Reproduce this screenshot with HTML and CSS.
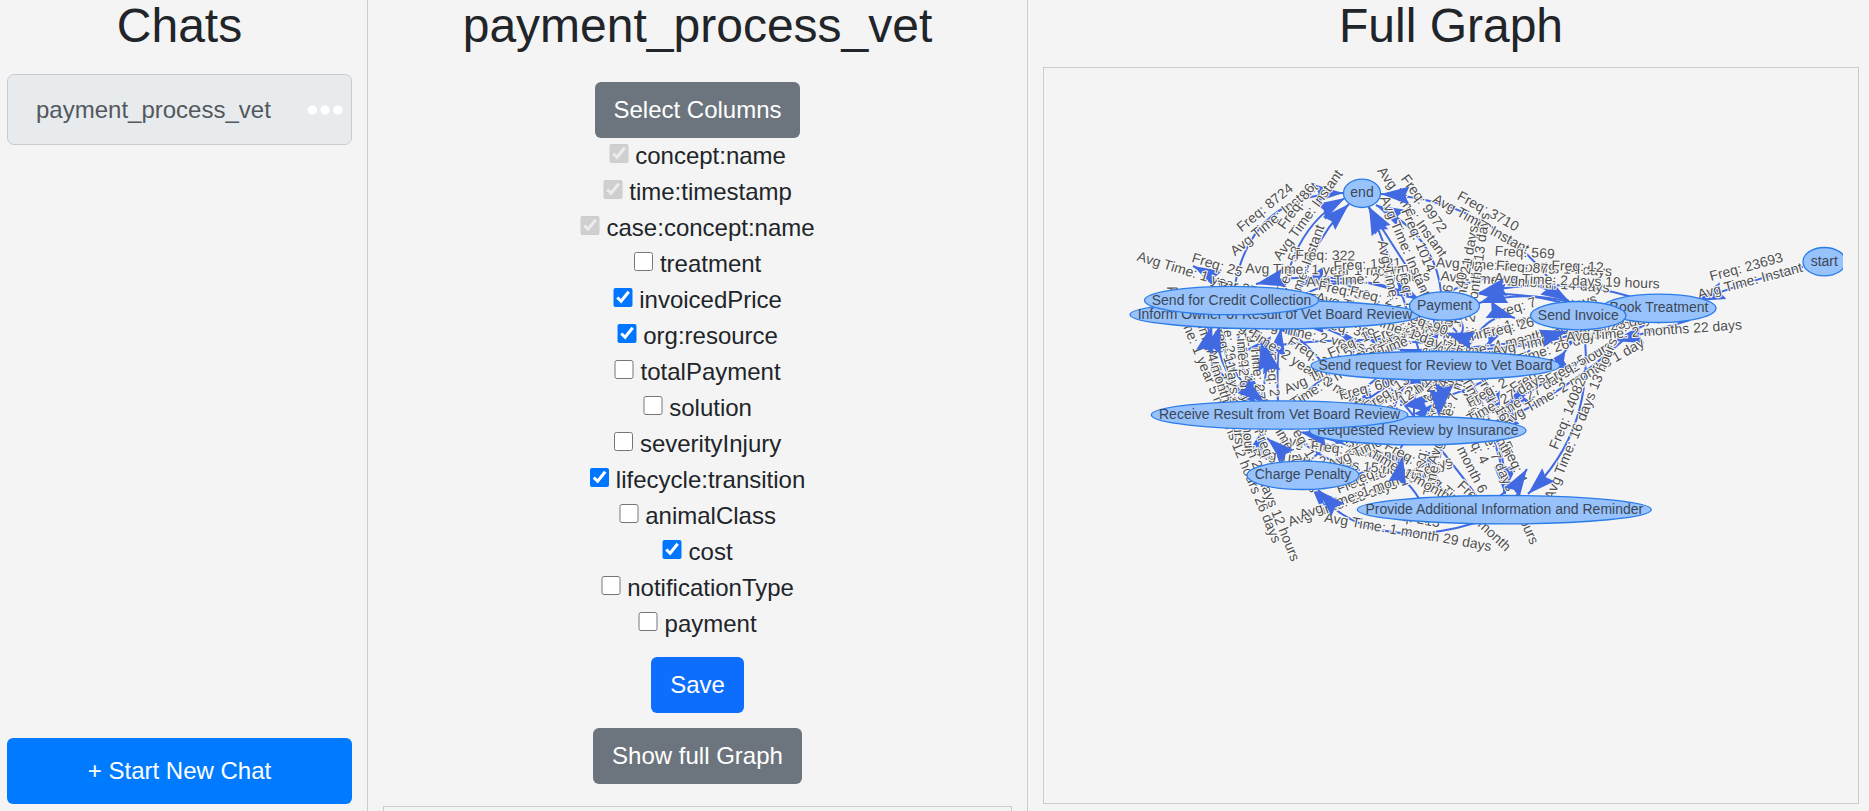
FILE: index.html
```html
<!DOCTYPE html>
<html lang="en">
<head>
<meta charset="utf-8">
<title>payment_process_vet</title>
<link rel="stylesheet" href="styles.css">
</head>
<body>
<div class="app">
  <aside class="chats">
    <h1 class="title">Chats</h1>
    <div class="chat-item">
      <span class="chat-name">payment_process_vet</span>
      <svg class="dots" width="36" height="12" viewBox="0 0 36 12"><circle cx="5.4" cy="6" r="4.7"/><circle cx="18.1" cy="6" r="4.7"/><circle cx="30.8" cy="6" r="4.7"/></svg>
    </div>
    <button class="new-chat">+ Start New Chat</button>
  </aside>
  <main class="config">
    <h1 class="title">payment_process_vet</h1>
    <button class="btn secondary select">Select Columns</button>
    <div class="columns">
      <label><input type="checkbox" checked disabled> concept:name</label>
      <label><input type="checkbox" checked disabled> time:timestamp</label>
      <label><input type="checkbox" checked disabled> case:concept:name</label>
      <label><input type="checkbox"> treatment</label>
      <label><input type="checkbox" checked> invoicedPrice</label>
      <label><input type="checkbox" checked> org:resource</label>
      <label><input type="checkbox"> totalPayment</label>
      <label><input type="checkbox"> solution</label>
      <label><input type="checkbox"> severityInjury</label>
      <label><input type="checkbox" checked> lifecycle:transition</label>
      <label><input type="checkbox"> animalClass</label>
      <label><input type="checkbox" checked> cost</label>
      <label><input type="checkbox"> notificationType</label>
      <label><input type="checkbox"> payment</label>
    </div>
    <button class="btn primary">Save</button>
    <button class="btn secondary show">Show full Graph</button>
    <div class="panel"></div>
  </main>
  <section class="graph">
    <h1 class="title">Full Graph</h1>
    <div class="graph-box"><svg id="network" class="network" width="784" height="704" viewBox="1059 83 784 704"></svg></div>
  </section>
</div>
<script src="graph.js"></script>
</body>
</html>
```
FILE: styles.css
```css
* { box-sizing: border-box; }
body {
  margin: 0;
  background: #f4f4f4;
  color: #212529;
  font: 24px/36px "Liberation Sans", Arial, sans-serif;
  overflow: hidden;
}
.app { display: grid; grid-template-columns: 368px 660px 1fr; height: 811px; }
.title { margin: 0; font-size: 48px; font-weight: 400; line-height: 52px; text-align: center; }
.chats {
  display: flex;
  flex-direction: column;
  padding: 0 15px 7px 7px;
  border-right: 1px solid #ccc;
}
.chat-item {
  display: flex;
  align-items: center;
  justify-content: space-between;
  height: 71px;
  margin-top: 22px;
  padding: 0 8px 0 28px;
  background: #e8ebee;
  border: 1px solid #c9cccf;
  border-radius: 7px;
  color: #53585d;
}
.dots { fill: #fff; }
button { border: 0; font: inherit; color: #fff; border-radius: 6px; }
.new-chat { height: 66px; margin-top: auto; background: #007bff; }
.config {
  display: flex;
  flex-direction: column;
  align-items: center;
  height: 811px;
  padding: 0 15px;
  border-right: 1px solid #ccc;
}
.btn { flex: none; height: 56px; padding: 0 19px; }
.select { margin-top: 30px; padding: 0 18.8px; }
.secondary { background: #6c757d; }
.primary { margin: 15px 0; background: #0d6efd; }
.columns { display: flex; flex-direction: column; align-items: center; }
.columns label { display: block; height: 36px; white-space: nowrap; }
.columns input { width: 19.5px; height: 19.5px; margin: 0; vertical-align: 0.6px; }
.panel { flex: 1; width: 629px; margin-top: 22px; border: 1px solid #ccc; border-bottom: 0; }
.graph { padding: 0 10px 0 15px; }
.graph-box { height: 737px; margin-top: 15px; padding: 15px; border: 1px solid #ccc; }
.network { display: block; overflow: hidden; font-size: 14px; }
.edge { fill: none; stroke: #4169e1; stroke-width: 2; }
.arrow { fill: #4169e1; }
.edge-label { fill: #505050; stroke: #fafafa; stroke-width: 2px; paint-order: stroke; text-anchor: middle; }
.node { fill: #97c2fc; stroke: #2b7ce9; stroke-width: 1.3; }
.node-label { fill: #3c4654; text-anchor: middle; }
```
FILE: graph.js
```js
// Curve: start, control, arrow tip; a trailing 1 puts the arrow above the labels.
const edges = [
  [1234,290,1250,195,1343,193], [1282,302,1292,228,1345,198], [1297,300,1312,240,1349,204,1],
  [1224,290,1220,280,1193,266], [1420,300,1340,265,1256,284,1], [1290,303,1350,262,1420,300],
  [1380,306,1340,270,1300,285], [1441,292,1435,235,1376,205], [1420,355,1400,280,1369,207,1],
  [1425,294,1402,260,1368,206], [1566,302,1500,200,1381,194,1], [1560,302,1520,292,1478,294,1],
  [1570,302,1520,290,1479,303,1], [1632,297,1560,275,1478,293,1], [1450,292,1500,260,1569,301],
  [1803,267,1750,280,1697,301], [1584,329,1596,430,1528,494,1], [1690,320,1640,335,1615,341],
  [1650,322,1560,370,1502,410], [1640,325,1560,400,1490,425], [1576,329,1568,360,1540,366],
  [1400,350,1500,350,1568,331,1], [1450,350,1540,350,1590,328], [1480,500,1420,420,1340,330],
  [1434,320,1437,360,1439,417,1], [1444,320,1446,370,1441,412,1], [1446,320,1420,370,1350,410],
  [1460,318,1470,340,1446,333,1], [1430,320,1400,340,1370,350], [1414,418,1412,380,1440,322],
  [1278,403,1276,360,1281,328], [1208,327,1205,380,1264,402], [1220,328,1222,370,1265,403,1],
  [1240,328,1232,365,1263,400], [1255,328,1265,360,1261,342,1], [1260,402,1270,365,1265,345,1],
  [1240,410,1200,370,1212,325,1], [1250,403,1210,360,1220,325,1], [1480,350,1360,330,1245,350],
  [1320,360,1295,330,1272,326], [1370,352,1330,325,1297,322], [1300,401,1320,370,1390,350],
  [1350,402,1380,370,1430,350], [1390,420,1400,380,1440,345], [1335,430,1380,390,1490,350],
  [1450,380,1500,420,1505,494], [1470,380,1510,450,1504,493], [1530,350,1470,400,1400,405],
  [1500,496,1520,480,1527,469,1], [1420,500,1390,450,1300,432,1], [1310,461,1340,430,1380,445],
  [1370,480,1400,470,1403,456,1], [1340,482,1395,460,1378,455], [1280,462,1275,445,1267,438,1],
  [1298,438,1320,460,1360,470], [1360,500,1330,502,1318,490,1], [1475,523,1370,555,1312,488],
  [1450,498,1430,480,1429,452], [1390,470,1400,440,1440,400], [1410,440,1370,430,1350,444],
  [1270,462,1260,440,1263,429], [1470,345,1490,310,1515,318,1], [1482,350,1500,330,1510,325],
  [1445,320,1475,345,1500,420], [1430,415,1450,380,1400,380], [1560,330,1450,380,1365,335]
];

// Label: centre of the duration line, angle, frequency, duration.
const labels = [
  [1213,279,17,'25','1 year 27 days'], [1274,219,-39,'8724','Instant'],
  [1308,215,-54,'86','Instant'], [1302,276,-70,'53','Instant'],
  [1325,270,1,'322','1 year 1 month'], [1368,279,-3,'1321','2 months'],
  [1341,305,12,'38','2 months'], [1368,310,14,'2','9 days'],
  [1412,212,54,'9972','Instant'], [1405,246,67,'1014','Instant'], [1393,293,78,'71','Instant'],
  [1481,224,29,'3710','Instant'], [1524,267,3,'569','3 months 14 days'],
  [1525,282,4,'879','1 month 14 days'], [1577,281,2,'12','2 days 19 hours'],
  [1459,309,-80,'6','1 month 21 days'], [1473,300,-82,'40','2 months 13 days'],
  [1519,322,-17,'7','1 month 3 days'], [1512,342,-14,'26','4 months 2 days'],
  [1570,343,-18,'31','26 days 7 hours'], [1575,334,-12,'9','1 month 23 days'],
  [1654,331,-4,'3','2 months 22 days'],
  [1750,281,-15,'23693','Instant'], [1541,388,-32,'48','27 days 2 hours'],
  [1573,382,-30,'5','2 months 1 day'], [1581,419,-68,'14082','16 days 13 hours'],
  [1408,532,10,'213','1 month 29 days'], [1466,509,43,'7','1 month'],
  [1370,493,-20,'284','28 days 20 hours'], [1376,488,-20,'28','1 month 7 days'],
  [1345,449,8,'1','24 months'], [1335,463,7,'28','2 days 15 hours'],
  [1224,414,67.5,'41','1 year 5 months 12 hours 26 days'], [1253,455,68,'1','1 month 28 days 12 hours'],
  [1231,362,84,'4','29 days 4 hours'], [1244,378,86,'829','2 days 1 hour'],
  [1258,376,84,'2','27 days'], [1210,350,72,'11','4 months'],
  [1300,364,33,'2','2 years 3 months'], [1340,342,13,'38','2 years 3 months'],
  [1358,356,-25,'19','1 month 9 days'], [1340,374,-32,'5','2 months 4 days'],
  [1372,402,-15,'606','1 month 23 days'], [1395,405,-35,'13','12 hours'],
  [1403,342,-22,'10','9 days'], [1441,350,-75,'4','2 days'],
  [1418,336,20,'90','1 day 7 hours'],
  [1462,450,63,'4','1 month 6 days'], [1501,468,66,'4','7 days 12 hours'],
  [1480,405,60,'16','1 month'], [1435,462,-78,'6','2 months'],
  [1451,405,-72,'4','7 months'], [1494,405,-30,'2','27 days'],
  [1398,468,30,'7','1 month'], [1383,440,-25,'2','20 hours'],
  [1288,445,60,'1','7 days']
];

// Node: centre, horizontal radius, name. Later nodes lie on top.
const nodes = [
  [1362,193.3,18.5,'end'], [1275,314.7,145,'Inform Owner of Result of Vet Board Review'],
  [1231.5,300.5,87,'Send for Credit Collection'], [1444.5,306,35,'Payment'],
  [1659,308.3,57,'Book Treatment'], [1578.3,315.7,47.7,'Send Invoice'],
  [1435.5,365.7,124.5,'Send request for Review to Vet Board'],
  [1417.7,430.7,108.3,'Requested Review by Insurance'],
  [1279.6,415,128.3,'Receive Result from Vet Board Review'],
  [1303,475.3,56,'Charge Penalty'],
  [1504.3,509.7,147,'Provide Additional Information and Reminder'],
  [1824.3,261.7,21.3,'start']
];

const edgeSvg = ([x0, y0, cx, cy, x1, y1]) =>
  `<path class="edge" d="M${x0} ${y0}Q${cx} ${cy} ${x1} ${y1}"/>`;
const arrowSvg = ([x0, y0, cx, cy, x1, y1]) => {
  const a = Math.atan2(y1 - cy, x1 - cx) * 180 / Math.PI;
  return `<path class="arrow" transform="translate(${x1} ${y1}) rotate(${a})" d="M0 0L-28 9L-24.5 0L-28 -9Z"/>`;
};
const labelSvg = ([x, y, a, freq, time]) =>
  `<g class="edge-label" transform="translate(${x} ${y}) rotate(${a})">` +
  `<text y="-10">Freq: ${freq}</text><text y="4.5">Avg Time: ${time}</text></g>`;
const nodeSvg = ([x, y, r, name]) =>
  `<ellipse class="node" cx="${x}" cy="${y}" rx="${r}" ry="14.2"/>` +
  `<text class="node-label" x="${x}" y="${y + 4}">${name}</text>`;

document.getElementById('network').innerHTML =
  edges.map(edgeSvg).join('') +
  edges.filter(e => !e[6]).map(arrowSvg).join('') +
  labels.map(labelSvg).join('') +
  edges.filter(e => e[6]).map(arrowSvg).join('') +
  nodes.map(nodeSvg).join('');
```
